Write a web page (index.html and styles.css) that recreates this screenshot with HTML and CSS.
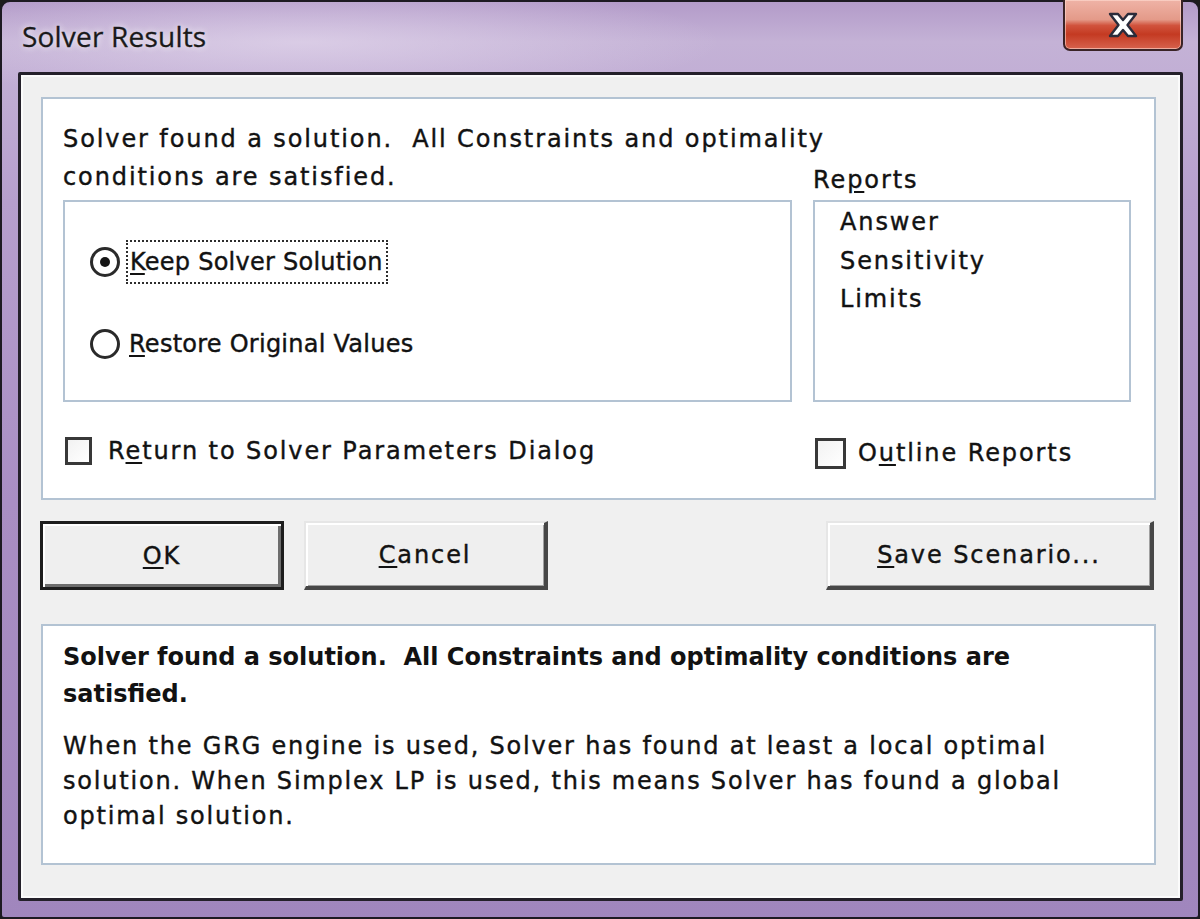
FILE: index.html
```html
<!DOCTYPE html>
<html>
<head>
<meta charset="utf-8">
<link rel="stylesheet" href="styles.css">
</head>
<body>
<div class="window">
  <div class="titlebar">
    <span class="title">Solver Results</span>
    <div class="close">
      <svg width="36" height="28" viewBox="0 0 36 28">
        <path d="M5 3 L13 3 L18 9 L23 3 L31 3 L22.5 14 L31 25 L23 25 L18 19 L13 25 L5 25 L13.5 14 Z" fill="#ffffff" stroke="#2b2b3a" stroke-width="2.4" stroke-linejoin="round"/>
      </svg>
    </div>
  </div>
  <div class="client">
    <div class="panel main">
      <p class="msg wide-text">Solver found a solution.&nbsp; All Constraints and optimality<br>conditions are satisfied.</p>
      <div class="reports-label wide-text">Re<u>p</u>orts</div>
      <div class="radiobox">
        <div class="radio-row">
          <span class="radio checked"></span>
          <span class="focus"><u>K</u>eep Solver Solution</span>
        </div>
        <div class="radio-row">
          <span class="radio"></span>
          <span class="rlabel"><u>R</u>estore Original Values</span>
        </div>
      </div>
      <div class="listbox wide-text">
        <div class="item">Answer</div>
        <div class="item">Sensitivity</div>
        <div class="item">Limits</div>
      </div>
      <div class="check-row left-check wide-text">
        <span class="checkbox"></span>
        <span>R<u>e</u>turn to Solver Parameters Dialog</span>
      </div>
      <div class="check-row right-check wide-text">
        <span class="checkbox"></span>
        <span>O<u>u</u>tline Reports</span>
      </div>
    </div>
    <div class="buttons">
      <div class="btn default wide-text"><span><u>O</u>K</span></div>
      <div class="btn wide-text"><span><u>C</u>ancel</span></div>
      <div class="spacer"></div>
      <div class="btn btn-wide wide-text"><span><u>S</u>ave Scenario...</span></div>
    </div>
    <div class="panel info">
      <p class="bold">Solver found a solution.&nbsp; All Constraints and optimality conditions are satisfied.</p>
      <p class="desc">When the GRG engine is used, Solver has found at least a local optimal solution. When Simplex LP is used, this means Solver has found a global optimal solution.</p>
    </div>
  </div>
</div>
</body>
</html>
```

FILE: styles.css
```css
* { box-sizing: border-box; }
html, body { margin: 0; padding: 0; background: #1c1c1c; }
body { width: 1200px; height: 919px; overflow: hidden; }

.window {
  width: 1200px;
  height: 919px;
  border: 2px solid #1d1a22;
  border-radius: 10px 10px 4px 4px;
  background:
    radial-gradient(ellipse 420px 60px at 300px 40px, rgba(235,225,242,0.55), rgba(235,225,242,0) 100%),
    linear-gradient(180deg, #b39bc9 0px, #c4b2d6 40px, #c2afd5 70px, #b69fcd 200px, #a98ec3 500px, #a086bd 919px);
  font-family: "DejaVu Sans", "Noto Sans", sans-serif;
  color: #121212;
  -webkit-text-stroke: 0.4px #121212;
  display: flex;
  flex-direction: column;
}

.wide-text { letter-spacing: 1.9px; }

.titlebar {
  height: 70px;
  display: flex;
  align-items: flex-start;
  padding-left: 20px;
}
.title {
  font-family: "Open Sans", "Noto Sans", sans-serif;
  font-size: 28px;
  line-height: 30px;
  margin-top: 19px;
  color: #1a1a1a;
  letter-spacing: 0.2px;
  -webkit-text-stroke: 0.3px #1a1a1a;
  text-shadow: 0 0 6px rgba(255,255,255,0.7), 0 0 10px rgba(255,255,255,0.5);
}
.close {
  margin-left: auto;
  margin-right: 15px;
  margin-top: -2px;
  width: 120px;
  height: 51px;
  border: 2px solid #3a2326;
  border-top: none;
  border-radius: 0 0 7px 7px;
  background: linear-gradient(180deg, #efb3a6 0%, #e49a89 40%, #d1533d 52%, #c43a22 70%, #d7624d 100%);
  box-shadow: inset 0 0 0 1px rgba(255,220,210,0.6);
  display: flex;
  align-items: center;
  justify-content: center;
  -webkit-text-stroke: 0;
}

.client {
  margin: 0 16px 0 16px;
  width: 1165px;
  height: 829px;
  border: 3px solid #24202a;
  border-radius: 2px;
  background: #f0f0f0;
  box-shadow: inset 0 0 0 2px #fbfbfb;
  padding: 22px 24px 0 20px;
}

.panel {
  background: #ffffff;
  border: 2px solid #b3c3d3;
}

.main {
  height: 403px;
  display: grid;
  grid-template-columns: 729px 318px;
  column-gap: 21px;
  grid-template-rows: 80px 202px 1fr;
  padding: 21px 21px 0 20px;
}
.msg {
  grid-column: 1 / 3;
  grid-row: 1;
  margin: 0;
  font-size: 24px;
  line-height: 38px;
}
.reports-label {
  grid-column: 2;
  grid-row: 1;
  align-self: end;
  font-size: 24px;
  line-height: 36px;
  margin-bottom: 2px;
}
.radiobox {
  grid-column: 1;
  grid-row: 2;
  border: 2px solid #b3c3d3;
  padding: 38px 0 0 25px;
  display: flex;
  flex-direction: column;
  gap: 38px;
}
.radio-row {
  display: flex;
  align-items: center;
  font-size: 24px;
  height: 44px;
  letter-spacing: 0.25px;
}
.radio {
  width: 30px;
  height: 30px;
  border-radius: 50%;
  border: 3px solid #2a2a2a;
  background: #fff;
  margin-right: 9px;
  flex: none;
  display: flex;
  align-items: center;
  justify-content: center;
}
.radio.checked::after {
  content: "";
  width: 10px;
  height: 10px;
  border-radius: 50%;
  background: #151515;
}
.focus {
  border: 2px dotted #2d2d2d;
  padding: 2px 3px 2px 2px;
  line-height: 36px;
  margin-left: -3px;
}
.rlabel { line-height: 36px; }

.listbox {
  grid-column: 2;
  grid-row: 2;
  border: 2px solid #b3c3d3;
  padding: 1px 0 0 25px;
  font-size: 24px;
  line-height: 38.5px;
}

.check-row {
  grid-row: 3;
  display: flex;
  align-items: center;
  font-size: 24px;
  height: 36px;
}
.left-check { grid-column: 1; margin-top: 31px; margin-left: 2px; }
.right-check { grid-column: 2; margin-top: 33px; margin-left: 2px; }
.checkbox {
  width: 27px;
  height: 28px;
  border: 3px solid #383838;
  background: linear-gradient(135deg, #f2f2f2, #ffffff);
  margin-right: 16px;
  flex: none;
}
.right-check .checkbox { width: 31px; height: 31px; margin-right: 12px; }

.buttons {
  display: flex;
  gap: 20px;
  margin: 21px 2px 34px -1px;
  height: 69px;
}
.spacer { flex: 1; }
.btn {
  width: 244px;
  height: 69px;
  background: #efefef;
  border-style: solid;
  border-width: 2px 4px 4px 2px;
  border-color: #e6e6e6 #474747 #474747 #e6e6e6;
  box-shadow: inset 2px 2px 0 #ffffff, inset -1px -1px 0 #a0a0a0;
  display: flex;
  align-items: center;
  justify-content: center;
  font-size: 24px;
}
.btn.default {
  border: 3px solid #1d1d1d;
  box-shadow: inset 2px 2px 0 #ffffff, inset -3px -3px 0 #6d6d6d;
}
.btn.btn-wide { width: 328px; }

.info {
  height: 241px;
  padding: 13px 62px 0 20px;
}
.info p { margin: 0; font-size: 24px; }
.info .bold { font-weight: 700; line-height: 37px; -webkit-text-stroke: 0; }
.info .desc { line-height: 35px; margin-top: 16px; letter-spacing: 1.8px; }

u { text-decoration-thickness: 2px; text-underline-offset: 3px; }
```
